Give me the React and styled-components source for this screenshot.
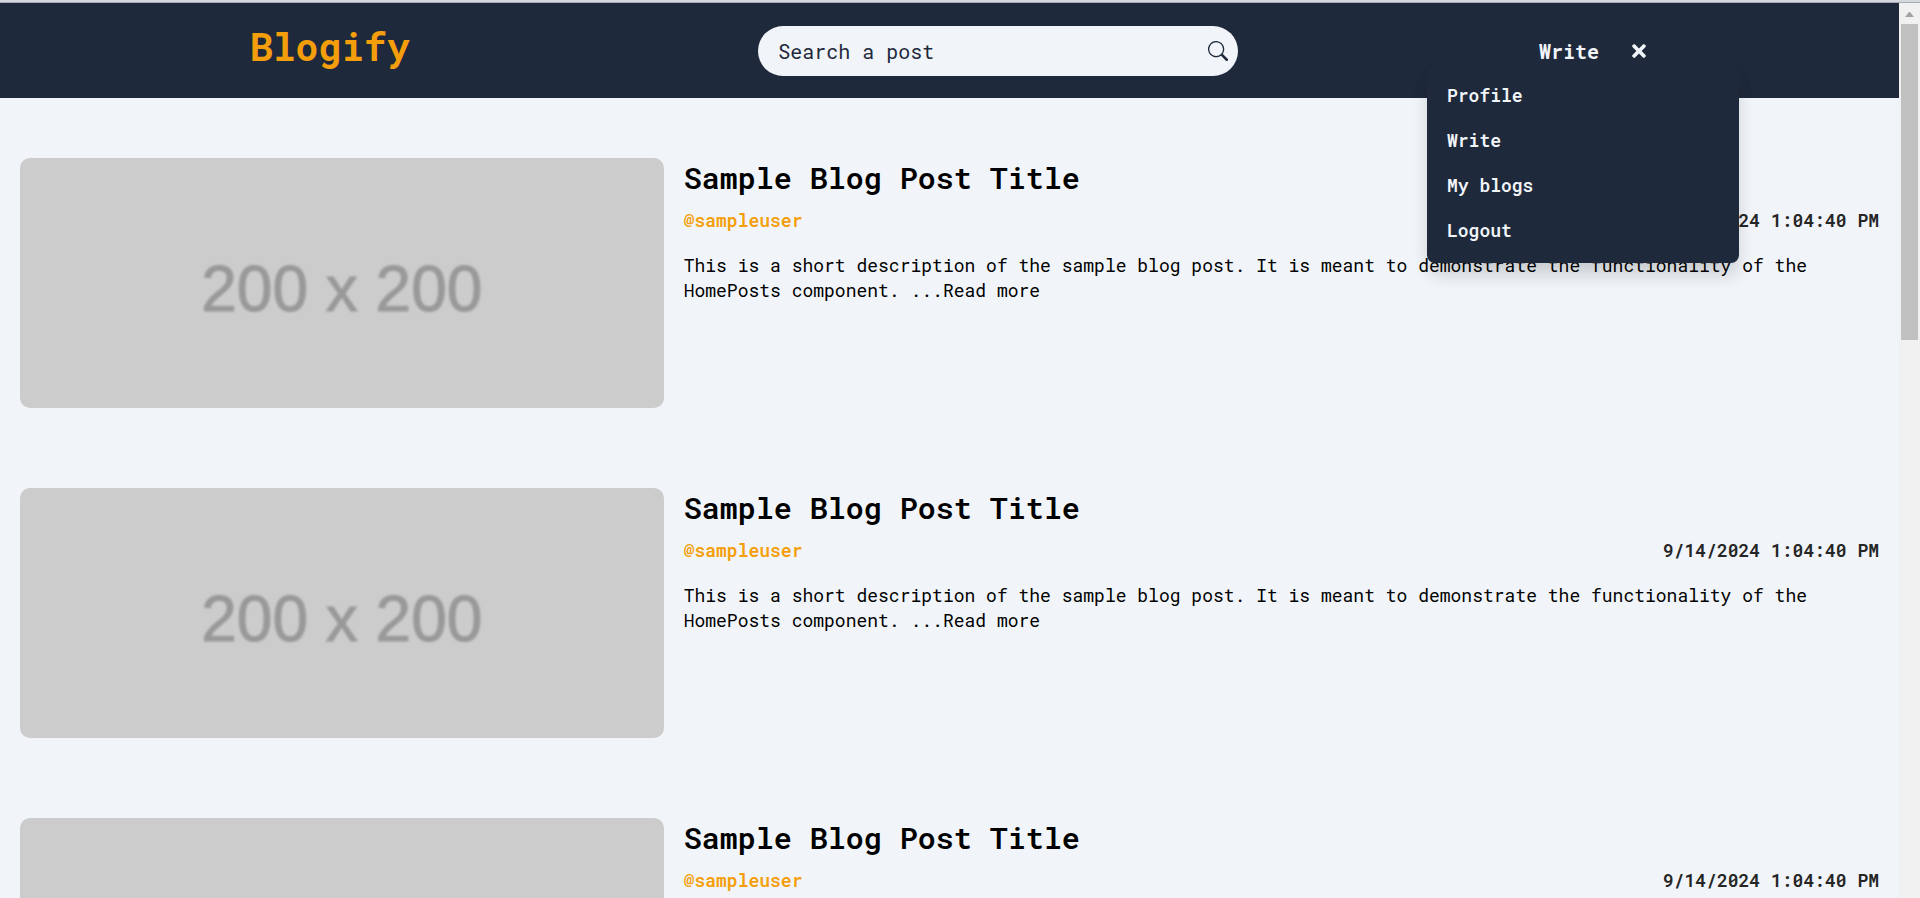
import React from "react";
import styled, { createGlobalStyle } from "styled-components";
import { FaTimes } from "react-icons/fa";
import { BsSearch } from "react-icons/bs";

const GlobalStyle = createGlobalStyle`
  *, *::before, *::after { box-sizing: border-box; }
  body {
    margin: 0;
    background: #f1f5f9;
    color: #000;
    font-family: "Roboto Mono", "Liberation Mono", monospace;
    font-size: 18px;
    line-height: 25px;
  }
  a { color: inherit; text-decoration: none; }
  button { font: inherit; border: 0; padding: 0; background: none; cursor: pointer; }
`;

const Shell = styled.div`
  display: flex;
  flex-direction: column;
  height: 100vh;
  overflow: hidden;
`;

const TopEdge = styled.div`
  flex: none;
  height: 3px;
  background: #d5d7df;
  border-bottom: 1px solid #a9abb3;
`;

const Viewport = styled.div`
  flex: 1;
  min-height: 0;
  display: flex;
`;

const Page = styled.div`
  flex: 1;
  min-width: 0;
  overflow-y: auto;
  scrollbar-width: none;
`;

const Header = styled.header`
  position: relative;
  display: flex;
  align-items: center;
  justify-content: space-between;
  height: 95px;
  padding: 0 250px;
  background: #1e293b;
  color: #f1f5f9;
`;

const Logo = styled.a`
  margin-right: 48px;
  padding-bottom: 10px;
  color: #f59e0b;
  font-size: 38px;
  line-height: 40px;
  font-weight: 700;
`;

const SearchForm = styled.form`
  display: flex;
  align-items: center;
  flex: 0 1 480px;
  height: 50px;
  padding: 0 10px 0 20px;
  border-radius: 25px;
  background: #f1f5f9;
  color: #1e293b;
`;

const SearchInput = styled.input`
  flex: 1;
  min-width: 0;
  padding: 2px 0 0;
  border: 0;
  outline: 0;
  background: transparent;
  color: inherit;
  font: inherit;
  font-size: 20px;
  &::placeholder { color: inherit; opacity: 1; }
`;

const IconButton = styled.button`
  display: grid;
  place-items: center;
  color: inherit;
`;

const Nav = styled.nav`
  position: relative;
  display: flex;
  align-items: center;
  gap: 30px;
  font-size: 20px;
  font-weight: 700;
`;

const NavLink = styled.a`
  padding-top: 2px;
`;

const Menu = styled.ul`
  position: absolute;
  top: 26px;
  right: -90px;
  z-index: 1;
  width: 312px;
  margin: 0;
  padding: 10px 20px;
  list-style: none;
  border-radius: 8px;
  background: #1e293b;
  box-shadow: 0 14px 20px -4px rgba(0, 0, 0, 0.12), 0 12px 16px rgba(0, 0, 0, 0.06);
  font-size: 18px;
  font-weight: 600;
`;

const MenuItem = styled.li`
  padding: 10px 0;
`;

const Posts = styled.main`
  display: flex;
  flex-direction: column;
  gap: 80px;
  padding: 60px 20px;
`;

const Post = styled.article`
  display: grid;
  grid-template-columns: 35fr 65fr;
  gap: 20px;
`;

const Thumbnail = styled.div`
  display: grid;
  place-items: center;
  height: 250px;
  padding-top: 12px;
  border-radius: 10px;
  background: #ccc;
  overflow: hidden;
`;

const ThumbnailLabel = styled.span`
  color: #999;
  font: 400 64px/80px "Liberation Sans", sans-serif;
  -webkit-text-stroke: 1px #999;
  filter: blur(1px);
`;

const Title = styled.h2`
  margin: 0 0 10px;
  font-size: 30px;
  line-height: 40px;
  font-weight: 600;
`;

const Meta = styled.div`
  display: flex;
  justify-content: space-between;
  margin-bottom: 20px;
  font-weight: 600;
`;

const Author = styled.a`
  && { color: #f59e0b; }
`;

const PostDate = styled.time`
  color: #262626;
`;

const Description = styled.p`
  margin: 0;
`;

const Scrollbar = styled.div`
  flex: none;
  width: 21px;
  padding: 0 2px;
  background: #f1f1f1;
`;

const ScrollArrow = styled.svg`
  display: block;
  width: 17px;
  height: 21px;
`;

const ScrollThumb = styled.div`
  height: 316px;
  background: #c1c1c1;
`;

const menuItems = ["Profile", "Write", "My blogs", "Logout"];
const posts = Array.from({ length: 3 }, (_, id) => ({
  id,
  title: "Sample Blog Post Title",
  author: "@sampleuser",
  date: "9/14/2024 1:04:40 PM",
  text: "This is a short description of the sample blog post. It is meant to demonstrate the functionality of the HomePosts component.",
}));

export default function App() {
  return (
    <Shell>
      <GlobalStyle />
      <TopEdge />
      <Viewport>
        <Page>
          <Header>
            <Logo href="#home">Blogify</Logo>
            <SearchForm role="search">
              <SearchInput type="text" aria-label="Search a post" placeholder="Search a post" />
              <IconButton type="submit" aria-label="Search"><BsSearch size={20} /></IconButton>
            </SearchForm>
            <Nav>
              <NavLink href="#write">Write</NavLink>
              <IconButton type="button" aria-label="Close menu"><FaTimes size={20} /></IconButton>
              <Menu>
                {menuItems.map((item) => (
                  <MenuItem key={item}><a href="#menu">{item}</a></MenuItem>
                ))}
              </Menu>
            </Nav>
          </Header>
          <Posts>
            {posts.map((post) => (
              <Post key={post.id}>
                <Thumbnail><ThumbnailLabel>200 x 200</ThumbnailLabel></Thumbnail>
                <div>
                  <Title>{post.title}</Title>
                  <Meta>
                    <Author href="#author">{post.author}</Author>
                    <PostDate>{post.date}</PostDate>
                  </Meta>
                  <Description>
                    {post.text} <a href="#post">...Read more</a>
                  </Description>
                </div>
              </Post>
            ))}
          </Posts>
        </Page>
        <Scrollbar aria-hidden="true">
          <ScrollArrow viewBox="0 0 17 21"><path d="M4 14 8 9H9L13 14Z" fill="#a3a3a3" /></ScrollArrow>
          <ScrollThumb />
        </Scrollbar>
      </Viewport>
    </Shell>
  );
}
